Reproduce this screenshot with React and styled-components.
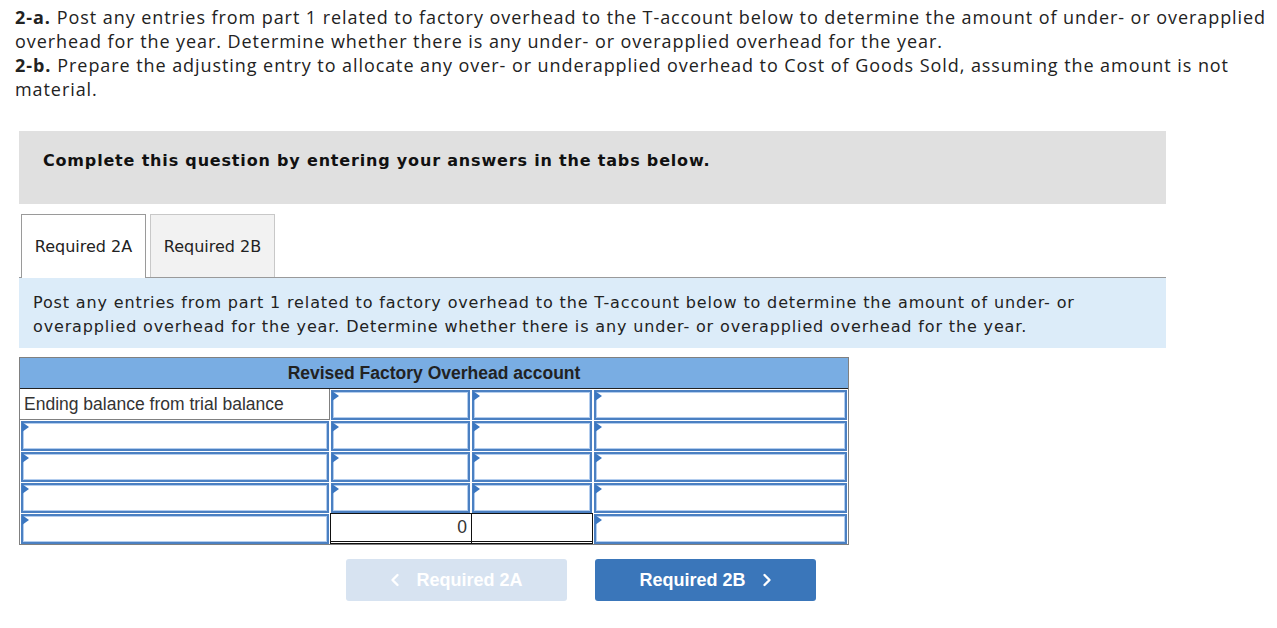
import React from "react";
import styled, { createGlobalStyle } from "styled-components";

const Global = createGlobalStyle`
  html, body { margin: 0; padding: 0; background: #fff; }
  body { font-family: "Open Sans", Arial, sans-serif; color: #222; }
`;

const Page = styled.div`
  width: 1277px;
  padding: 5px 0 0 15px;
  box-sizing: border-box;
`;

const Intro = styled.div`
  font-family: "Open Sans", Arial, sans-serif;
  font-size: 18px;
  letter-spacing: 0.93px;
  line-height: 24px;
  color: #222;
  width: 1262px;
  p { margin: 0; }
`;

const Part = styled.b`
  font-weight: 700;
  margin-right: 6px;
`;

const Question = styled.div`
  margin: 30px 0 0 4px;
  width: 1147px;
`;

const Banner = styled.div`
  background: #e0e0e0;
  height: 73px;
  box-sizing: border-box;
  padding: 20px 0 0 24px;
  font-family: "DejaVu Sans", Verdana, sans-serif;
  font-weight: 700;
  font-size: 16px;
  line-height: 20px;
  letter-spacing: 0.82px;
  color: #111;
`;

const Tabs = styled.div`
  display: flex;
  gap: 4px;
  margin-top: 10px;
  padding-left: 2px;
  border-bottom: 1px solid #9a9a9a;
  height: 64px;
  box-sizing: border-box;
`;

const Tab = styled.div`
  width: 125px;
  box-sizing: border-box;
  border: 1px solid ${(p) => (p.$active ? "#9a9a9a" : "#c8c8c8")};
  border-bottom: none;
  background: ${(p) => (p.$active ? "#fff" : "#f2f2f2")};
  margin-bottom: ${(p) => (p.$active ? "-1px" : "0")};
  display: flex;
  align-items: center;
  justify-content: center;
  font-family: "DejaVu Sans", Verdana, sans-serif;
  font-size: 16px;
  color: #222;
`;

const Info = styled.div`
  background: #dcecf9;
  height: 70px;
  box-sizing: border-box;
  padding: 13px 14px 0 14px;
  font-family: "DejaVu Sans", Verdana, sans-serif;
  font-size: 16px;
  letter-spacing: 0.86px;
  line-height: 24px;
  color: #222;
`;

const TAccount = styled.div`
  margin-top: 9px;
  width: 830px;
  border: 1px solid #808080;
  box-sizing: border-box;
  display: grid;
  grid-template-columns: 310px 141px 122px 1fr;
  grid-auto-rows: 31px;
  font-family: "Liberation Sans", Arial, sans-serif;
`;

const Header = styled.div`
  grid-column: 1 / -1;
  background: #79ade3;
  border-bottom: 1px solid #222;
  display: flex;
  align-items: center;
  justify-content: center;
  font-weight: 700;
  font-size: 17.5px;
  color: #222;
`;

const Label = styled.div`
  border-right: 1px solid #808080;
  border-bottom: 1px solid #808080;
  display: flex;
  align-items: center;
  padding-left: 4px;
  font-size: 17.5px;
  color: #333;
`;

const Input = styled.div`
  position: relative;
  box-sizing: border-box;
  border: 2px solid #4b80c2;
  box-shadow: inset 0 0 0 1px #b3cdee;
  margin: 1px 1px 0 1px;
  background: #fff;
  &::before {
    content: "";
    position: absolute;
    left: -1px;
    top: -1px;
    border-left: 7px solid #3b77c1;
    border-top: 5px solid transparent;
    border-bottom: 5px solid transparent;
  }
`;

const Total = styled.div`
  box-sizing: border-box;
  border-top: 1px solid #111;
  border-left: 1px solid #111;
  border-bottom: 3px double #111;
  display: flex;
  align-items: center;
  justify-content: flex-end;
  padding-right: 4px;
  font-size: 17.5px;
  color: #333;
  ${(p) => p.$last && "border-right: 1px solid #111;"}
`;

const Nav = styled.div`
  display: flex;
  gap: 28px;
  margin: 14px 0 0 327px;
`;

const NavButton = styled.div`
  width: 221px;
  height: 42px;
  border-radius: 3px;
  background: ${(p) => (p.$disabled ? "#d7e3f1" : "#3a76ba")};
  color: #fff;
  display: flex;
  align-items: center;
  justify-content: center;
  gap: 16px;
  font-family: "Liberation Sans", Arial, sans-serif;
  font-weight: 700;
  font-size: 18px;
  svg { display: block; }
`;

const Chevron = ({ dir }) => (
  <svg width="10" height="14" viewBox="0 0 10 14">
    <path
      d={dir === "left" ? "M7.5 2 L2.5 7 L7.5 12" : "M2.5 2 L7.5 7 L2.5 12"}
      fill="none"
      stroke="#fff"
      strokeWidth="2.4"
      strokeLinecap="round"
      strokeLinejoin="round"
    />
  </svg>
);

export default function App() {
  return (
    <>
      <Global />
      <Page>
        <Intro>
          <p>
            <Part>2-a.</Part>Post any entries from part 1 related to factory overhead to the T-account below to determine the amount of under- or overapplied overhead for the year. Determine whether there is any under- or overapplied overhead for the year.
          </p>
          <p>
            <Part>2-b.</Part>Prepare the adjusting entry to allocate any over- or underapplied overhead to Cost of Goods Sold, assuming the amount is not material.
          </p>
        </Intro>
        <Question>
          <Banner>Complete this question by entering your answers in the tabs below.</Banner>
          <Tabs>
            <Tab $active>Required 2A</Tab>
            <Tab>Required 2B</Tab>
          </Tabs>
          <Info>
            Post any entries from part 1 related to factory overhead to the T-account below to determine the amount of under- or overapplied overhead for the year. Determine whether there is any under- or overapplied overhead for the year.
          </Info>
          <TAccount>
            <Header>Revised Factory Overhead account</Header>
            <Label>Ending balance from trial balance</Label>
            <Input />
            <Input />
            <Input />
            {[0, 1, 2].map((i) => (
              <React.Fragment key={i}>
                <Input />
                <Input />
                <Input />
                <Input />
              </React.Fragment>
            ))}
            <Input />
            <Total>0</Total>
            <Total $last />
            <Input />
          </TAccount>
          <Nav>
            <NavButton $disabled>
              <Chevron dir="left" />
              Required 2A
            </NavButton>
            <NavButton>
              Required 2B
              <Chevron dir="right" />
            </NavButton>
          </Nav>
        </Question>
      </Page>
    </>
  );
}
